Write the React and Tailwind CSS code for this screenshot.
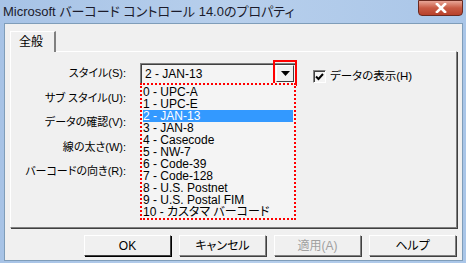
import { useState } from "react";

const JP = { fontFamily: '"Liberation Sans", "Noto Sans CJK JP", sans-serif', fontFeatureSettings: '"palt"' };

const items = [
  "0 - UPC-A",
  "1 - UPC-E",
  "2 - JAN-13",
  "3 - JAN-8",
  "4 - Casecode",
  "5 - NW-7",
  "6 - Code-39",
  "7 - Code-128",
  "8 - U.S. Postnet",
  "9 - U.S. Postal FIM",
  "10 - カスタマ バーコード",
];

const labels = ["スタイル(S):", "サブ スタイル(U):", "データの確認(V):", "線の太さ(W):", "バーコードの向き(R):"];

function Button({ children, primary, disabled }) {
  return (
    <button
      className={`w-[87px] h-[21px] bg-[#f0f0f0] text-[12px] border border-t-white border-l-white ${
        primary ? "border-r-[#404040] border-b-[#404040] shadow-[1px_1px_0_#000]" : "border-r-[#808080] border-b-[#808080] shadow-[1px_1px_0_#404040]"
      } ${disabled ? "text-[#a0a0a0]" : "text-black"}`}
    >
      {children}
    </button>
  );
}

export default function App() {
  const [selected, setSelected] = useState(2);
  return (
    <div
      className="w-[466px] h-[263px] bg-gradient-to-r from-[#a7c3e6] via-[#b7cfec] to-[#aac6e8] relative overflow-hidden"
      style={JP}
    >
      {/* title bar */}
      <div className="h-[23px] flex items-center pl-[3px] relative">
        <span className="text-[13px] text-[#1b1b2b]">Microsoft バーコード コントロール 14.0のプロパティ</span>
        <div className="absolute right-[3px] top-0 w-[45px] h-[16px] rounded-b-[4px] border border-[#6b2a20] bg-gradient-to-b from-[#e8a597] via-[#c85a44] to-[#b8412c] flex items-center justify-center">
          <svg width="12" height="10" viewBox="0 0 12 10">
            <path d="M2 1 L10 9 M10 1 L2 9" stroke="#fff" strokeWidth="2.6" strokeLinecap="square" />
          </svg>
        </div>
      </div>

      {/* client */}
      <div className="absolute left-[4px] right-[3px] top-[23px] bottom-[2px] bg-[#f0f0f0] border border-[#7f9db9] flex flex-col px-[5px] pt-[6px]">
        {/* tab */}
        <div className="flex">
          <div className="w-[46px] h-[21px] border-t border-l border-white border-r-2 border-r-[#808080] text-[12px] flex items-center pl-[8px] bg-[#f0f0f0] relative top-[1px] z-10">
            全般
          </div>
        </div>
        <div className="w-[447px] h-[177px] border border-t-white border-l-white border-r-[#808080] border-b-[#808080] shadow-[1px_1px_0_#404040] relative">
          <div className="flex pt-[11px]">
            <div className="w-[115px] flex flex-col text-[11px] text-black text-right">
              {labels.map((l) => (
                <div key={l} className="h-[24.5px] leading-[21px] whitespace-nowrap">
                  {l}
                </div>
              ))}
            </div>
            <div className="ml-[14px] flex items-start">
              <div className="w-[156px] h-[21px] border border-t-[#808080] border-l-[#808080] border-r-white border-b-white bg-[#f4f4f4] shadow-[inset_1px_1px_0_#404040] flex items-center pl-[4px] text-[12px] relative">
                2 - JAN-13
                <div className="absolute right-[1px] top-[1px] w-[18px] h-[17px] bg-[#f0f0f0] border border-t-white border-l-white border-r-[#404040] border-b-[#404040] flex items-center justify-center">
                  <svg width="9" height="5" viewBox="0 0 9 5">
                    <path d="M0 0 H9 L4.5 5 Z" fill="#000" />
                  </svg>
                </div>
              </div>
              <div className="ml-[17px] mt-[5px] flex items-center gap-[4px]">
                <div className="w-[13px] h-[13px] border border-t-[#808080] border-l-[#808080] border-r-white border-b-white bg-[#f4f4f4] shadow-[inset_1px_1px_0_#404040] flex items-center justify-center">
                  <svg width="9" height="8" viewBox="0 0 9 8">
                    <path d="M1 3.5 L3.5 6 L8 1" stroke="#000" strokeWidth="2" fill="none" />
                  </svg>
                </div>
                <span className="text-[11.5px]">データの表示(H)</span>
              </div>
            </div>
          </div>

          {/* red highlight around dropdown button */}
          <div className="absolute left-[262px] top-[8px] w-[24px] h-[26px] border-2 border-[#ff0000]" />

          {/* dropdown list */}
          <div className="absolute left-[129px] top-[31px] w-[156px] h-[137px] border-2 border-dotted border-[#ff0000] bg-[#f4f4f4] p-[1px] z-20">
            {items.map((it, i) => (
              <div
                key={it}
                onMouseEnter={() => setSelected(i)}
                className={`h-[12px] leading-[12px] text-[12px] whitespace-nowrap overflow-hidden ${
                  i === selected ? "bg-[#3399ff] text-white" : "text-black"
                }`}
              >
                {it}
              </div>
            ))}
          </div>
        </div>

        {/* buttons */}
        <div className="flex justify-end gap-[8px] pr-[1px] mt-[7px]">
          <Button primary>OK</Button>
          <Button>キャンセル</Button>
          <Button disabled>適用(A)</Button>
          <Button>ヘルプ</Button>
        </div>
      </div>
    </div>
  );
}
